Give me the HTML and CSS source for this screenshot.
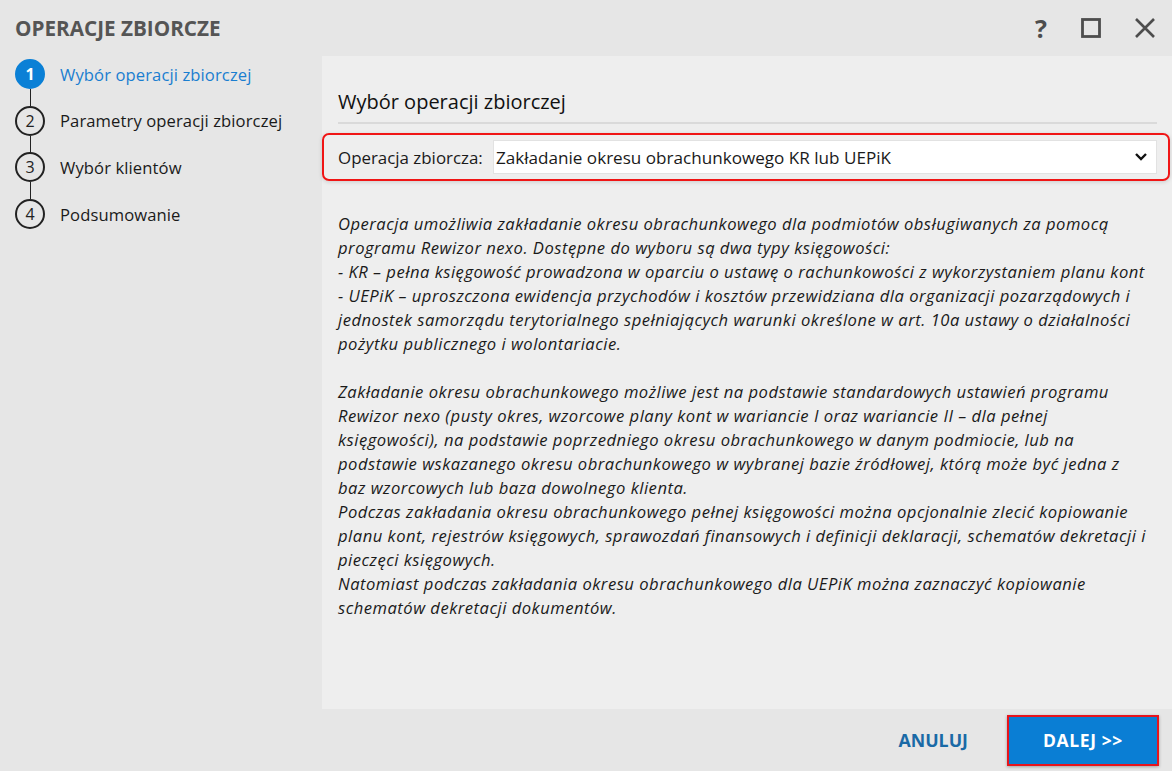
FILE: index.html
```html
<!DOCTYPE html>
<html lang="pl">
<head>
    <meta charset="UTF-8">
    <title>Operacje zbiorcze</title>
    <link rel="stylesheet" href="styles.css">
</head>
<body>
    <div class="window">
        <div class="titlebar">
            <h1>OPERACJE ZBIORCZE</h1>
            <div class="title-buttons">
                <span class="help">?</span>
                <svg class="icon maximize" width="22" height="22" viewBox="0 0 22 22"><rect x="2.5" y="2.5" width="17" height="17" fill="none" stroke="#4d4d4d" stroke-width="2.8"/></svg>
                <svg class="icon" width="22" height="22" viewBox="0 0 22 22"><path d="M2 2 L20 20 M20 2 L2 20" stroke="#4d4d4d" stroke-width="2.6" fill="none"/></svg>
            </div>
        </div>
        <div class="middle">
            <div class="steps">
                <div class="step active"><span class="num">1</span><span class="label">Wybór operacji zbiorczej</span></div>
                <div class="step"><span class="num">2</span><span class="label">Parametry operacji zbiorczej</span></div>
                <div class="step"><span class="num">3</span><span class="label">Wybór klientów</span></div>
                <div class="step last"><span class="num">4</span><span class="label">Podsumowanie</span></div>
            </div>
            <div class="content">
                <h2>Wybór operacji zbiorczej</h2>
                <div class="operation-row">
                    <label for="operation">Operacja zbiorcza:</label>
                    <div class="select" id="operation">
                        <span>Zakładanie okresu obrachunkowego KR lub UEPiK</span>
                        <svg width="14" height="10" viewBox="0 0 14 10"><path d="M2 2 L7 7 L12 2" stroke="#111" stroke-width="2.4" fill="none"/></svg>
                    </div>
                </div>
                <div class="description">
                    <p>Operacja umożliwia zakładanie okresu obrachunkowego dla podmiotów obsługiwanych za pomocą<br>
                    programu Rewizor nexo. Dostępne do wyboru są dwa typy księgowości:<br>
                    - KR – pełna księgowość prowadzona w oparciu o ustawę o rachunkowości z wykorzystaniem planu kont<br>
                    - UEPiK – uproszczona ewidencja przychodów i kosztów przewidziana dla organizacji pozarządowych i<br>
                    jednostek samorządu terytorialnego spełniających warunki określone w art. 10a ustawy o działalności<br>
                    pożytku publicznego i wolontariacie.</p>
                    <p>Zakładanie okresu obrachunkowego możliwe jest na podstawie standardowych ustawień programu<br>
                    Rewizor nexo (pusty okres, wzorcowe plany kont w wariancie I oraz wariancie II – dla pełnej<br>
                    księgowości), na podstawie poprzedniego okresu obrachunkowego w danym podmiocie, lub na<br>
                    podstawie wskazanego okresu obrachunkowego w wybranej bazie źródłowej, którą może być jedna z<br>
                    baz wzorcowych lub baza dowolnego klienta.<br>
                    Podczas zakładania okresu obrachunkowego pełnej księgowości można opcjonalnie zlecić kopiowanie<br>
                    planu kont, rejestrów księgowych, sprawozdań finansowych i definicji deklaracji, schematów dekretacji i<br>
                    pieczęci księgowych.<br>
                    Natomiast podczas zakładania okresu obrachunkowego dla UEPiK można zaznaczyć kopiowanie<br>
                    schematów dekretacji dokumentów.</p>
                </div>
            </div>
        </div>
        <div class="footer">
            <button class="link-button">ANULUJ</button>
            <button class="primary-button">DALEJ &gt;&gt;</button>
        </div>
    </div>
</body>
</html>
```

FILE: styles.css
```css
body {
    margin: 0;
    font-family: "Open Sans", "Noto Sans", sans-serif;
    color: #1a1a1a;
    background: #e6e6e6;
}
.window {
    width: 1172px;
    height: 771px;
    display: flex;
    flex-direction: column;
    background: #e6e6e6;
}
.titlebar {
    height: 56px;
    display: flex;
    align-items: center;
    justify-content: space-between;
    padding: 0 16px 0 15px;
}
.titlebar h1 {
    margin: 0;
    font-size: 20.7px;
    font-weight: 700;
    color: #555;
}
.title-buttons {
    display: flex;
    align-items: center;
}
.help {
    font-size: 25px;
    font-weight: 700;
    color: #4d4d4d;
    width: 22px;
    text-align: center;
    margin-right: 28px;
}
.maximize {
    margin-right: 32px;
}
.middle {
    flex: 1;
    display: flex;
    min-height: 0;
}
.steps {
    width: 322px;
    flex-shrink: 0;
    padding-top: 3px;
    display: flex;
    flex-direction: column;
    gap: 16.7px;
}
.step {
    display: flex;
    align-items: center;
    height: 30px;
    position: relative;
}
.step::after {
    content: "";
    position: absolute;
    left: 29.5px;
    top: 30px;
    height: 17px;
    border-left: 1.5px solid #222;
}
.step.last::after {
    display: none;
}
.num {
    width: 26px;
    height: 26px;
    border: 2px solid #222;
    border-radius: 50%;
    margin-left: 15px;
    display: flex;
    align-items: center;
    justify-content: center;
    font-size: 16px;
    color: #222;
}
.step.active .num {
    background: #0b80d6;
    border-color: #0b80d6;
    color: #fff;
    font-weight: 700;
}
.label {
    margin-left: 15px;
    font-size: 16.6px;
    letter-spacing: 0.1px;
    color: #1a1a1a;
}
.step.active .label {
    color: #1a7ed0;
}
.content {
    flex: 1;
    min-width: 0;
    background: #eeeeee;
    padding: 32px 15px 0 16px;
}
.content h2 {
    margin: 0;
    font-size: 20px;
    line-height: 27px;
    font-weight: 400;
    color: #111;
    padding-bottom: 7px;
    border-bottom: 2px solid #dadada;
}
.operation-row {
    margin: 9px -13px 0 -16px;
    height: 44px;
    border: 2px solid #f01515;
    border-radius: 7px;
    display: flex;
    align-items: center;
    padding: 0 11px 0 14px;
    box-shadow: 0 1px 4px rgba(0, 0, 0, 0.15);
}
.operation-row label {
    font-size: 16.9px;
    width: 155px;
}
.select {
    flex: 1;
    height: 32px;
    background: #fff;
    border: 1px solid #e2e2e2;
    display: flex;
    align-items: center;
    justify-content: space-between;
    padding: 0 8px 0 2px;
    font-size: 17.1px;
}
.description {
    margin-top: 31px;
    font-size: 16.6px;
    letter-spacing: 0.5px;
    font-style: italic;
    line-height: 24px;
    white-space: nowrap;
    color: #1a1a1a;
}
.description p {
    margin: 0 0 24px 0;
}
.footer {
    height: 62px;
    display: flex;
    align-items: center;
    justify-content: flex-end;
    padding-right: 13px;
}
.link-button {
    background: none;
    border: none;
    font-family: inherit;
    font-size: 17.8px;
    font-weight: 700;
    color: #1a6aa6;
    margin-right: 33px;
}
.primary-button {
    width: 152px;
    height: 51px;
    background: #0a7ed4;
    border: 2px solid #e8141c;
    color: #fff;
    font-family: inherit;
    font-size: 17.5px;
    letter-spacing: 0.6px;
    font-weight: 700;
    box-shadow: 0 1px 3px rgba(0, 0, 0, 0.3);
}
```
